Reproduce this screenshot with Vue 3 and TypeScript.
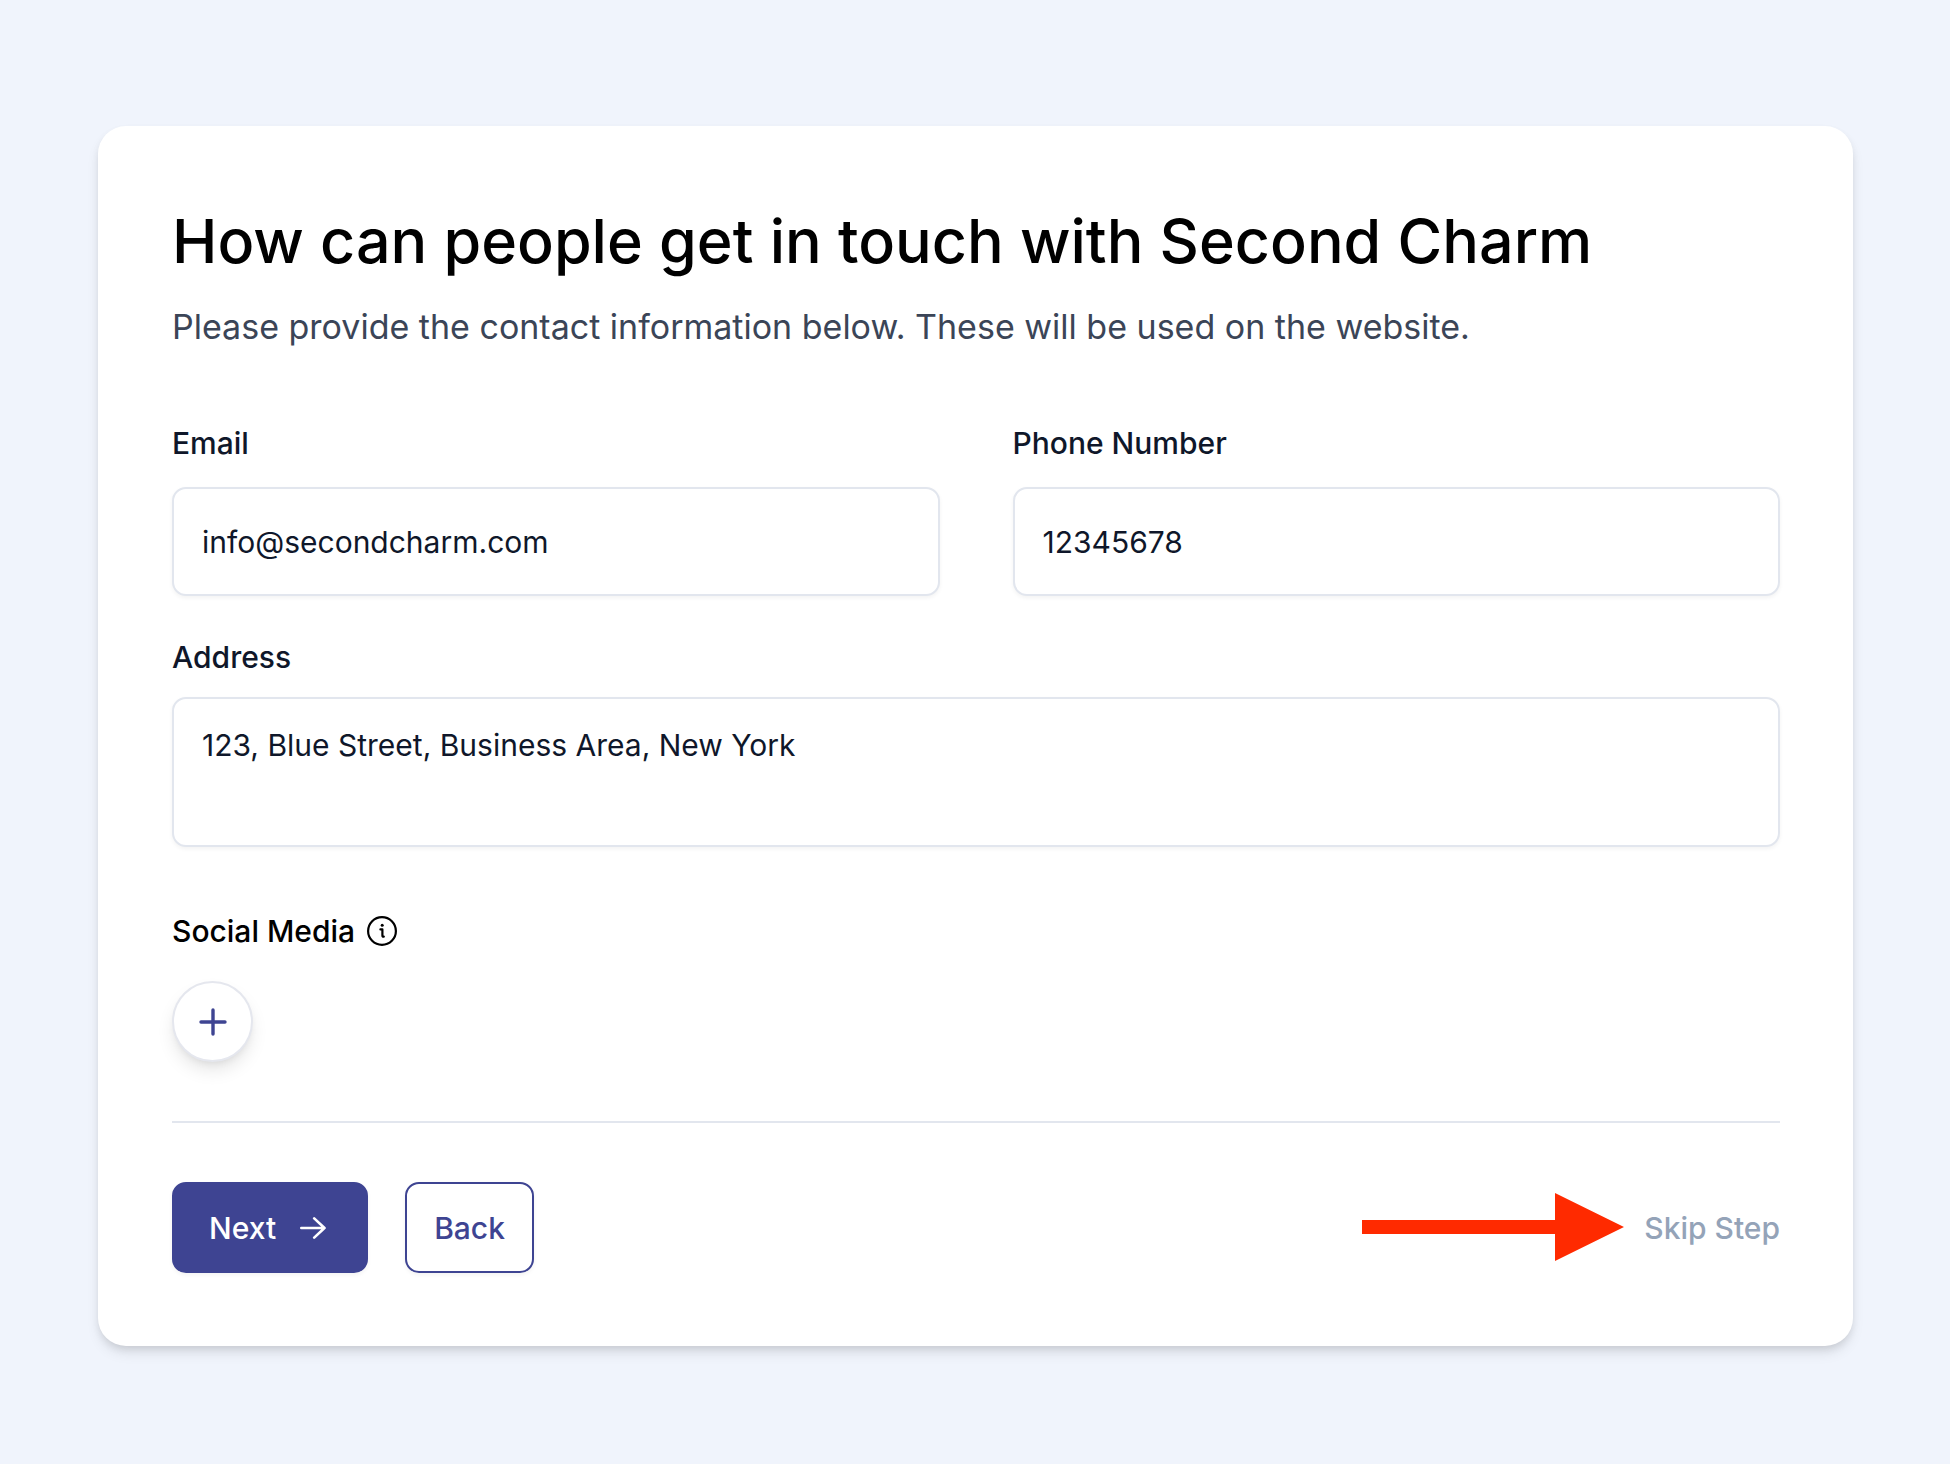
<script setup lang="ts">
import { reactive } from 'vue'

interface ContactForm {
  email: string
  phone: string
  address: string
}

const businessName = 'Second Charm'

const form = reactive<ContactForm>({
  email: 'info@secondcharm.com',
  phone: '12345678',
  address: '123, Blue Street, Business Area, New York',
})
</script>

<template>
  <main class="page">
    <form class="card" @submit.prevent>
      <h1 class="title">How can people get in touch with {{ businessName }}</h1>
      <p class="subtitle">Please provide the contact information below. These will be used on the website.</p>

      <div class="columns">
        <div class="field">
          <label class="label" for="email">Email</label>
          <input id="email" v-model="form.email" class="control" type="email" />
        </div>
        <div class="field">
          <label class="label" for="phone">Phone Number</label>
          <input id="phone" v-model="form.phone" class="control" type="tel" />
        </div>
      </div>

      <div class="field field-address">
        <label class="label" for="address">Address</label>
        <textarea id="address" v-model="form.address" class="control control-area" spellcheck="false"></textarea>
      </div>

      <section class="social">
        <h2 class="social-title">
          Social Media
          <svg class="info" viewBox="0 0 30 30" fill="none" stroke="currentColor" aria-hidden="true">
            <circle cx="15" cy="15" r="13.9" stroke-width="2.2" />
            <circle cx="15.2" cy="9.3" r="1.5" fill="currentColor" stroke="none" />
            <path d="M13.4 13.4h2v6.2c0 1 .5 1.3 1.4 1" stroke-width="2.2" stroke-linecap="round" stroke-linejoin="round" />
          </svg>
        </h2>
        <button class="add" type="button" aria-label="Add social media">
          <svg class="plus" viewBox="0 0 28 28" fill="none" stroke="currentColor" stroke-width="3.4" stroke-linecap="round" aria-hidden="true">
            <path d="M14 2v24M2 14h24" />
          </svg>
        </button>
      </section>

      <footer class="actions">
        <button class="button button-primary" type="submit">
          Next
          <svg class="next-arrow" viewBox="0 0 26 22" fill="none" stroke="currentColor" stroke-width="2.6" stroke-linecap="round" stroke-linejoin="round" aria-hidden="true">
            <path d="M1.3 11h23.2M14.2 1.4l10.3 9.6-10.3 9.6" />
          </svg>
        </button>
        <button class="button button-outline" type="button">Back</button>
        <div class="skip">
          <svg class="pointer" viewBox="0 0 262 70" aria-hidden="true">
            <path d="M0 27h193V0l69 34-69 34V41H0z" fill="#ff2a00" />
          </svg>
          <a class="skip-link" href="#skip">Skip Step</a>
        </div>
      </footer>
    </form>
  </main>
</template>

<style>
body {
  margin: 0;
  background: #f0f4fc;
}
</style>

<style scoped>
.page {
  box-sizing: border-box;
  min-height: 100vh;
  padding: 126px 97px 118px 98px;
  font-family: Inter, "Liberation Sans", sans-serif;
  font-size: 30px;
  line-height: 44px;
  color: #0f172a;
}

.card {
  padding: 73px 73px 73px 74px;
  border-radius: 28px;
  background: #fff;
  box-shadow:
    0 8px 14px -2px rgba(0, 0, 0, 0.1),
    0 4px 8px -2px rgba(0, 0, 0, 0.1);
}

.title {
  margin: 0;
  font-size: 61px;
  line-height: 84px;
  font-weight: 500;
  color: #000;
}

.subtitle {
  margin: 14px 0 64px;
  font-size: 34px;
  line-height: 60px;
  color: #3b4557;
}

.columns {
  display: grid;
  grid-template-columns: 1fr 1fr;
  gap: 73px;
}

.field {
  display: flex;
  flex-direction: column;
  gap: 22px;
}

.field-address {
  gap: 18px;
  margin-top: 39px;
}

.label {
  font-weight: 500;
}

.control {
  box-sizing: border-box;
  width: 100%;
  height: 109px;
  padding: 0 28px;
  border: 2px solid #e2e6ee;
  border-radius: 14px;
  outline: none;
  background: #fff;
  box-shadow: 0 2px 4px rgba(0, 0, 0, 0.05);
  font: inherit;
  color: inherit;
}

.control-area {
  display: block;
  height: 150px;
  padding: 24px 28px;
  resize: none;
}

.social {
  padding: 62px 0 59px;
  border-bottom: 2px solid #e2e6ee;
}

.social-title {
  display: flex;
  align-items: center;
  gap: 12px;
  margin: 0 0 28px;
  font-size: 30px;
  line-height: 44px;
  font-weight: 500;
  color: #000;
}

.info {
  width: 30px;
  height: 30px;
}

.add {
  display: flex;
  align-items: center;
  justify-content: center;
  width: 81px;
  height: 81px;
  padding: 0;
  border: 2px solid #e5e7ee;
  border-radius: 50%;
  background: #fff;
  box-shadow:
    0 10px 18px -2px rgba(0, 0, 0, 0.1),
    0 4px 8px -4px rgba(0, 0, 0, 0.1);
  color: #3e4492;
}

.plus {
  width: 28px;
  height: 28px;
}

.actions {
  display: flex;
  align-items: center;
  gap: 37px;
  padding-top: 59px;
}

.button {
  display: flex;
  align-items: center;
  box-sizing: border-box;
  height: 91px;
  border: 2px solid #3e4492;
  border-radius: 14px;
  box-shadow: 0 2px 4px rgba(0, 0, 0, 0.05);
  font: inherit;
  font-weight: 500;
}

.button-primary {
  gap: 24px;
  padding: 0 40px 0 35px;
  background: #3e4492;
  color: #fff;
}

.button-outline {
  padding: 0 27px;
  background: #fff;
  color: #3e4492;
}

.next-arrow {
  width: 26px;
  height: 22px;
}

.skip {
  display: flex;
  align-items: center;
  gap: 20px;
  margin-left: auto;
}

.pointer {
  width: 262px;
  height: 70px;
}

.skip-link {
  font-weight: 500;
  color: #94a3b8;
  text-decoration: none;
}
</style>
